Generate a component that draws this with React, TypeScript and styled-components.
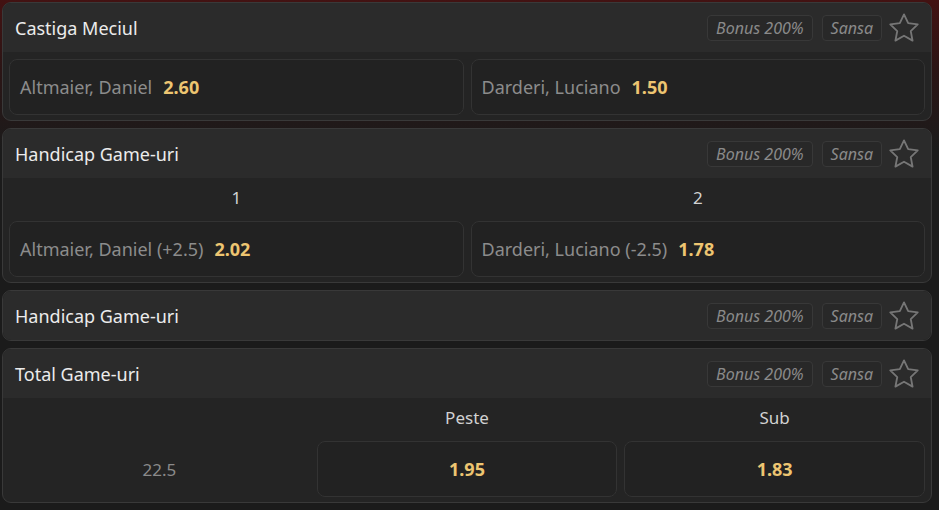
import React from 'react'
import styled, { createGlobalStyle } from 'styled-components'

const GlobalStyle = createGlobalStyle`
  html, body {
    margin: 0;
    padding: 0;
  }
  body {
    background: linear-gradient(180deg, #431212 0px, #2b1515 70px, #1b1b1b 150px, #1b1b1b 100%);
    font-family: "Noto Sans", "Open Sans", sans-serif;
    min-height: 510px;
  }
`

type Outcome = { name: string; odd: string }

type Market = {
  title: string
  labels?: string[]
  line?: string
  outcomes: Outcome[]
}

const MARKETS: Market[] = [
  {
    title: 'Castiga Meciul',
    outcomes: [
      { name: 'Altmaier, Daniel', odd: '2.60' },
      { name: 'Darderi, Luciano', odd: '1.50' },
    ],
  },
  {
    title: 'Handicap Game-uri',
    labels: ['1', '2'],
    outcomes: [
      { name: 'Altmaier, Daniel (+2.5)', odd: '2.02' },
      { name: 'Darderi, Luciano (-2.5)', odd: '1.78' },
    ],
  },
  {
    title: 'Handicap Game-uri',
    outcomes: [],
  },
  {
    title: 'Total Game-uri',
    labels: ['Peste', 'Sub'],
    line: '22.5',
    outcomes: [
      { name: '', odd: '1.95' },
      { name: '', odd: '1.83' },
    ],
  },
]

const StarIcon = () => (
  <StarSvg width="34" height="34" viewBox="0 0 24 24" fill="none" stroke="#767676" strokeWidth="1.3" strokeLinejoin="round">
    <path d="M12 2.4l2.95 6.2 6.75.85-4.95 4.7 1.3 6.75L12 17.5l-6.05 3.4 1.3-6.75-4.95-4.7 6.75-.85z" />
  </StarSvg>
)

const MarketCard = ({ market }: { market: Market }) => {
  const cols = market.line ? 3 : 2
  return (
    <Card>
      <Header>
        <Title>{market.title}</Title>
        <Actions>
          <Badge>Bonus 200%</Badge>
          <Badge>Sansa</Badge>
          <StarIcon />
        </Actions>
      </Header>
      {market.outcomes.length > 0 && (
        <Body>
          {market.labels && (
            <Grid $cols={cols}>
              {market.line && <span />}
              {market.labels.map((l) => (
                <ColumnLabel key={l}>{l}</ColumnLabel>
              ))}
            </Grid>
          )}
          <Grid $cols={cols}>
            {market.line && <LineValue>{market.line}</LineValue>}
            {market.outcomes.map((o, i) => (
              <OddButton key={i} $centered={!o.name}>
                {o.name && <OutcomeName>{o.name}</OutcomeName>}
                <Odd>{o.odd}</Odd>
              </OddButton>
            ))}
          </Grid>
        </Body>
      )}
    </Card>
  )
}

const App = () => (
  <>
    <GlobalStyle />
    <Page>
      {MARKETS.map((m, i) => (
        <MarketCard key={i} market={m} />
      ))}
    </Page>
  </>
)

export default App

const Page = styled.div`
  display: flex;
  flex-direction: column;
  gap: 7px;
  padding: 2px 7px 0 2px;
`

const Card = styled.div`
  background: #242424;
  border: 1px solid #393939;
  border-radius: 9px;
  overflow: hidden;
`

const Header = styled.div`
  display: flex;
  align-items: center;
  justify-content: space-between;
  height: 49px;
  padding: 0 10px 0 12px;
  background: #2b2b2b;
`

const Title = styled.div`
  color: #ececec;
  font-size: 18px;
`

const Actions = styled.div`
  display: flex;
  align-items: center;
  gap: 9px;
`

const StarSvg = styled.svg`
  margin-left: -4px;
`

const Badge = styled.div`
  display: flex;
  align-items: center;
  height: 24px;
  padding: 0 8px;
  border: 1px solid #383838;
  border-radius: 4px;
  background: #282828;
  color: #8a8a8a;
  font-size: 16px;
  font-style: italic;
`

const Body = styled.div`
  padding: 7px 6px 5px;
`

const Grid = styled.div<{ $cols: number }>`
  display: grid;
  grid-template-columns: repeat(${(p) => p.$cols}, 1fr);
  gap: 7px;
`

const ColumnLabel = styled.div`
  height: 24px;
  margin-bottom: 12px;
  display: flex;
  align-items: center;
  justify-content: center;
  color: #d2d2d2;
  font-size: 17px;
`

const LineValue = styled.div`
  display: flex;
  align-items: center;
  justify-content: center;
  color: #8a8a8a;
  font-size: 17px;
`

const OddButton = styled.div<{ $centered: boolean }>`
  display: flex;
  align-items: center;
  justify-content: ${(p) => (p.$centered ? 'center' : 'flex-start')};
  gap: 11px;
  height: 54px;
  padding: 0 10px;
  border: 1px solid #333333;
  border-radius: 8px;
  background: #222222;
`

const OutcomeName = styled.span`
  color: #8c8c8c;
  font-size: 18px;
`

const Odd = styled.span`
  color: #edc571;
  font-size: 18px;
  font-weight: 700;
`
